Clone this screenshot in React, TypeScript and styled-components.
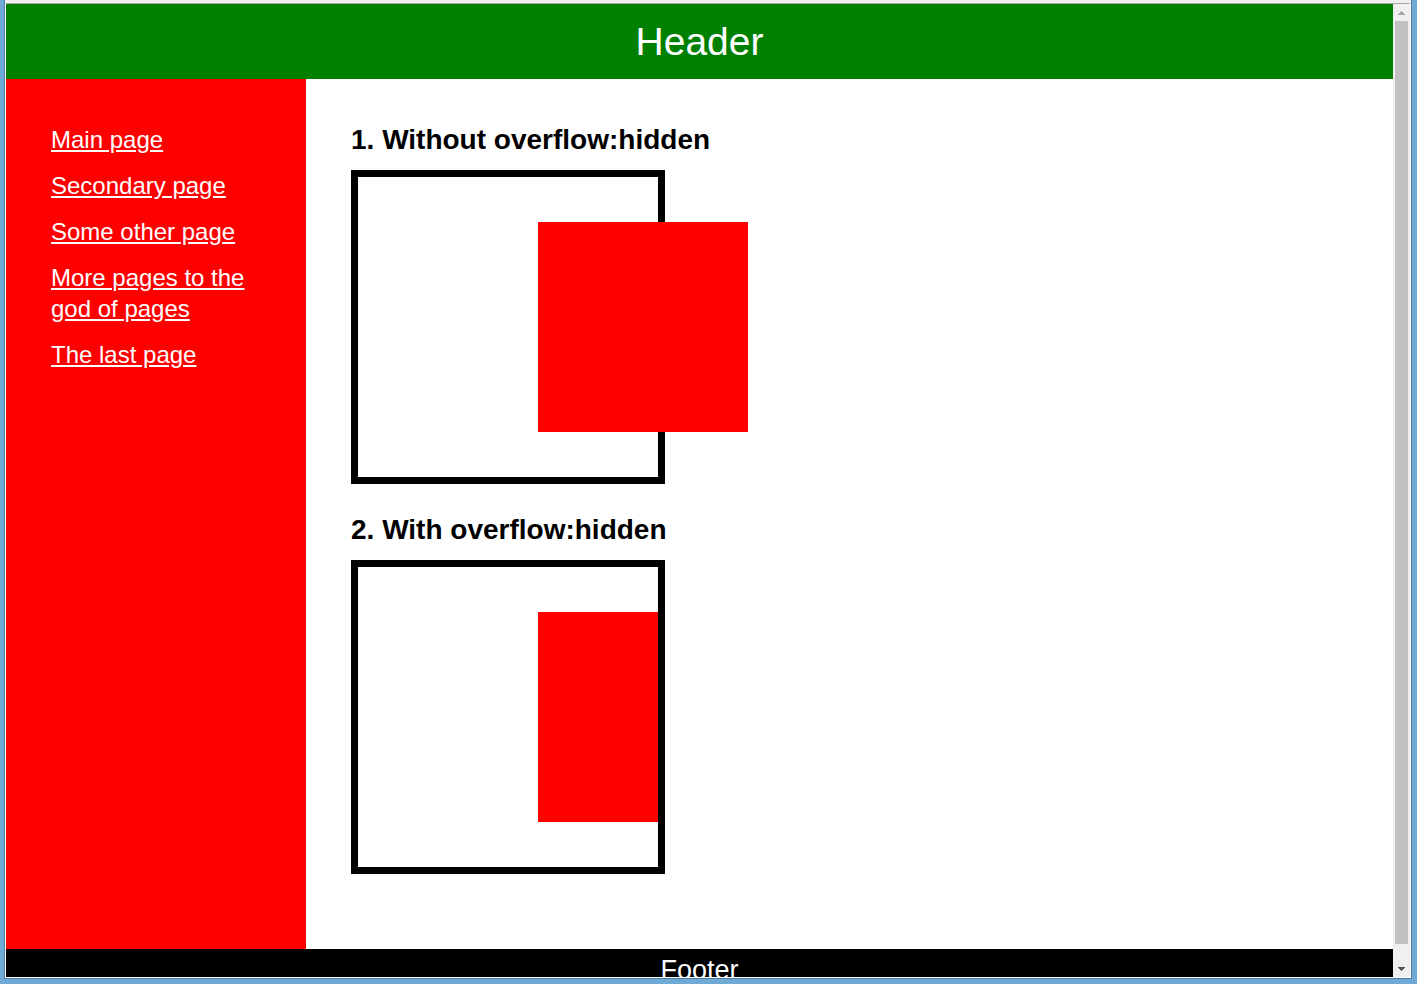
import React from "react";
import styled, { createGlobalStyle } from "styled-components";

const GlobalStyle = createGlobalStyle`
  * { box-sizing: border-box; }
  body {
    margin: 0;
    font-family: "Liberation Sans", Arial, sans-serif;
    background: #6faad5;
  }
`;

const Desktop = styled.div`
  height: 100vh;
  display: flex;
  flex-direction: column;
  padding: 0 5px 5px 4px;
  background: #6faad5;
`;

const BrowserWindow = styled.div`
  flex: 1;
  min-height: 0;
  display: flex;
  flex-direction: column;
  border: solid #4a7ea2;
  border-width: 0 1px 1px 1px;
  background: #f0f0f0;
`;

const ToolbarEdge = styled.div`
  flex: none;
  height: 4px;
  margin: 0 1px;
  border-bottom: 1px solid #a8a8a8;
  background: #f0f0f0;
`;

const Viewport = styled.div`
  flex: 1;
  min-height: 0;
  display: flex;
  border: solid #ffffff;
  border-width: 0 1px 1px 1px;
`;

const Page = styled.div`
  flex: 1;
  min-width: 0;
  overflow: hidden;
  background: #ffffff;
`;

const Header = styled.header`
  padding: 15px;
  background: #008000;
  color: #ffffff;
  font-size: 39px;
  line-height: 45px;
  text-align: center;
`;

const Columns = styled.div`
  display: flex;
`;

const Sidebar = styled.nav`
  flex: none;
  width: 300px;
  padding: 45px;
  background: #ff0000;
`;

const LinkList = styled.ul`
  display: flex;
  flex-direction: column;
  gap: 15px;
  margin: 0;
  padding: 0;
  list-style: none;
  font-size: 24px;
  line-height: 31px;
`;

const PageLink = styled.a`
  color: #ffffff;
  text-decoration: underline;
`;

const Content = styled.main`
  flex: 1;
  min-width: 0;
  padding: 45px;
`;

const Example = styled.section`
  margin-bottom: 30px;
`;

const Title = styled.h2`
  margin: 0 0 15px;
  font-size: 28px;
  line-height: 31px;
`;

const Box = styled.div<{ $clip?: boolean }>`
  width: 314px;
  padding: 45px 0 45px 180px;
  border: 7px solid #000000;
  overflow: ${(p) => (p.$clip ? "hidden" : "visible")};
`;

const Square = styled.div`
  width: 210px;
  height: 210px;
  background: #ff0000;
`;

const Footer = styled.footer`
  padding: 6px 15px;
  background: #000000;
  color: #ffffff;
  font-size: 27px;
  line-height: 31px;
  text-align: center;
`;

const Scrollbar = styled.div`
  flex: none;
  width: 17px;
  display: flex;
  flex-direction: column;
  align-items: center;
  background: #f0f0f0;
`;

const ScrollButton = styled.button`
  flex: none;
  width: 17px;
  height: 17px;
  padding: 0;
  border: 0;
  display: flex;
  align-items: center;
  justify-content: center;
  background: transparent;
`;

const Track = styled.div`
  flex: 1;
  width: 13px;
  padding-bottom: 16px;
  display: flex;
`;

const Thumb = styled.div`
  flex: 1;
  background: #c1c1c1;
`;

const links = [
  "Main page",
  "Secondary page",
  "Some other page",
  "More pages to the god of pages",
  "The last page",
];

export default function App() {
  return (
    <Desktop>
      <GlobalStyle />
      <BrowserWindow>
        <ToolbarEdge />
        <Viewport>
          <Page>
            <Header>Header</Header>
            <Columns>
              <Sidebar>
                <LinkList>
                  {links.map((label) => (
                    <li key={label}>
                      <PageLink href="#">{label}</PageLink>
                    </li>
                  ))}
                </LinkList>
              </Sidebar>
              <Content>
                <Example>
                  <Title>1. Without overflow:hidden</Title>
                  <Box>
                    <Square />
                  </Box>
                </Example>
                <Example>
                  <Title>2. With overflow:hidden</Title>
                  <Box $clip>
                    <Square />
                  </Box>
                </Example>
              </Content>
            </Columns>
            <Footer>Footer</Footer>
          </Page>
          <Scrollbar>
            <ScrollButton aria-label="Scroll up">
              <svg width="7" height="4" viewBox="0 0 7 4" shapeRendering="crispEdges">
                <path d="M3 0h1v1h1v1h1v1h1v1H0V3h1V2h1V1h1z" fill="#a3a3a3" />
              </svg>
            </ScrollButton>
            <Track>
              <Thumb />
            </Track>
            <ScrollButton aria-label="Scroll down">
              <svg width="7" height="4" viewBox="0 0 7 4" shapeRendering="crispEdges">
                <path d="M0 0h7v1H6v1H5v1H4v1H3V3H2V2H1V1H0z" fill="#505050" />
              </svg>
            </ScrollButton>
          </Scrollbar>
        </Viewport>
      </BrowserWindow>
    </Desktop>
  );
}
